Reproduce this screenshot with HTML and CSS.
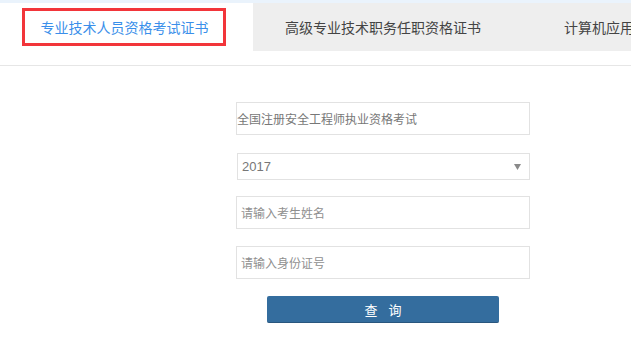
FILE: index.html
```html
<!DOCTYPE html>
<html lang="zh-CN">
<head>
<meta charset="utf-8">
<title>证书查询</title>
<link rel="stylesheet" href="styles.css">
</head>
<body>
<div class="topbar"></div>
<div class="tabs-wrap">
  <div class="tabs">
    <div class="tab tab-active"><span class="tab-box">专业技术人员资格考试证书</span></div>
    <div class="tab tab-second">高级专业技术职务任职资格证书</div>
    <div class="tab tab-third">计算机应用能力考试合格证书</div>
  </div>
</div>
<form class="form">
  <div class="field field-exam">全国注册安全工程师执业资格考试</div>
  <div class="field field-select">
    <span>2017</span>
    <svg class="arrow" width="7" height="6" viewBox="0 0 7 6"><path d="M0 0H7L3.5 6Z" fill="#8a8a8a"/></svg>
  </div>
  <input class="field field-input field-name" type="text" placeholder="请输入考生姓名">
  <input class="field field-input field-id" type="text" placeholder="请输入身份证号">
  <button class="btn" type="button">查 询</button>
</form>
</body>
</html>
```

FILE: styles.css
```css
html, body {
  margin: 0;
  padding: 0;
  background: #ffffff;
  font-family: "Noto Sans CJK SC", "Liberation Sans", sans-serif;
}

.topbar {
  height: 3px;
  background: #eaf3fc;
}

.tabs-wrap {
  padding-bottom: 14px;
  border-bottom: 1px solid #e6e6e6;
}

.tabs {
  display: flex;
  height: 48px;
  overflow: hidden;
}

.tab {
  font-size: 14px;
  color: #444444;
  display: flex;
  align-items: center;
  white-space: nowrap;
  box-sizing: border-box;
  flex-shrink: 0;
}

.tab-active {
  width: 253px;
  background: #ffffff;
  padding: 5px 27px 5px 22px;
}

.tab-box {
  box-sizing: border-box;
  width: 204px;
  height: 38px;
  border: 3px solid #f2353a;
  color: #3a8fea;
  display: flex;
  align-items: center;
  justify-content: center;
  padding-left: 1px;
}

.tab-second {
  width: 260px;
  background: #eeeeee;
  justify-content: center;
}

.tab-third {
  flex: 1 0 auto;
  background: #eeeeee;
  padding-left: 51px;
}

.form {
  margin: 36px 0 0 236px;
  width: 294px;
  display: flex;
  flex-direction: column;
}

.field {
  box-sizing: border-box;
  width: 294px;
  border: 1px solid #e2e2e2;
  background: #ffffff;
  font-family: "Noto Sans CJK SC", "Liberation Sans", sans-serif;
  font-size: 12px;
  color: #888888;
  margin: 0;
  outline: none;
}

.field-exam {
  height: 33px;
  display: flex;
  align-items: center;
  padding: 0;
  color: #777777;
}

.field-select {
  margin-top: 18px;
  height: 27px;
  width: 293px;
  margin-left: 1px;
  display: flex;
  align-items: center;
  justify-content: space-between;
  padding: 0 8px 0 4px;
  font-family: "Liberation Sans", "Noto Sans CJK SC", sans-serif;
  font-size: 13px;
  color: #777777;
}

.arrow {
  display: block;
}

.field-input {
  height: 33px;
  padding: 0 4px;
}

.field-input::placeholder {
  color: #8f8f8f;
}

.field-name {
  margin-top: 16px;
}

.field-id {
  margin-top: 17px;
}

.btn {
  margin: 17px 0 0 31px;
  width: 232px;
  height: 27px;
  border: none;
  border-bottom: 1px solid #29567e;
  border-radius: 2px;
  background: #346d9e;
  color: #ffffff;
  font-family: "Noto Sans CJK SC", "Liberation Sans", sans-serif;
  font-size: 13px;
  letter-spacing: 4px;
  padding: 0 0 0 4px;
  cursor: pointer;
}
```
